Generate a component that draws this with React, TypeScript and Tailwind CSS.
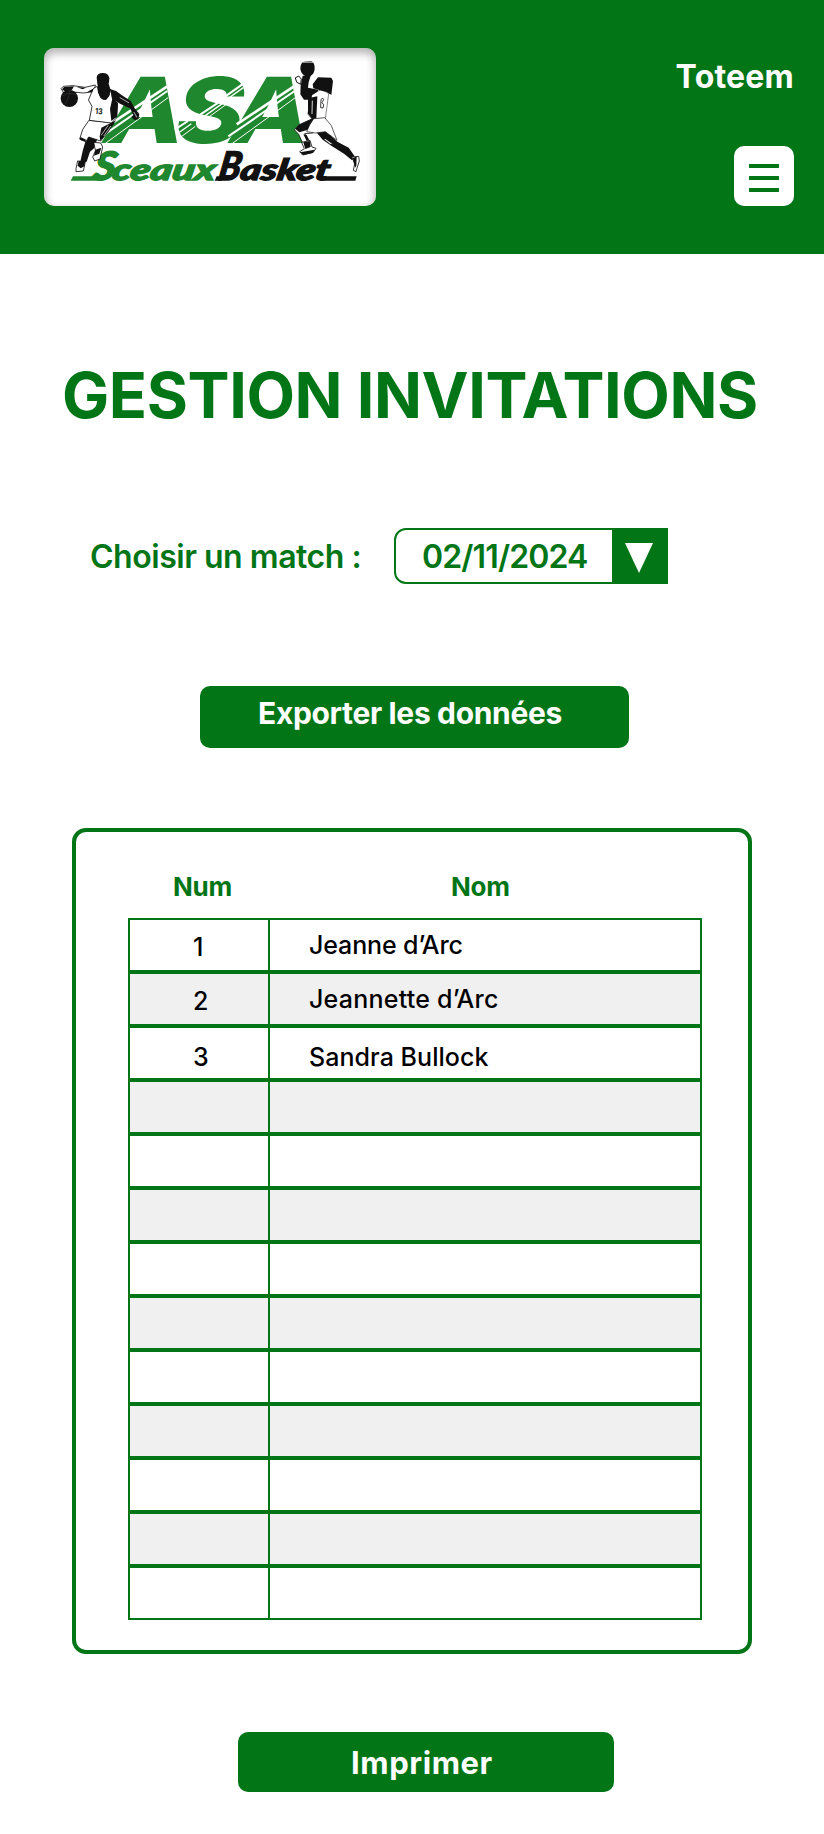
type Guest = { num: string; name: string; numPad: string; namePad: string; tracking: string };

const guests: Guest[] = [
  { num: "1", name: "Jeanne d’Arc", numPad: "pt-[15px]", namePad: "pt-[13px]", tracking: "tracking-[-0.12px]" },
  { num: "2", name: "Jeannette d’Arc", numPad: "pt-[15px]", namePad: "pt-[13px]", tracking: "tracking-[0.24px]" },
  { num: "3", name: "Sandra Bullock", numPad: "pt-[17px]", namePad: "pt-[17px]", tracking: "tracking-[0.05px]" },
];

const ROW_COUNT = 13;

function DribblingPlayer() {
  return (
    <g strokeLinejoin="round" strokeLinecap="round">
      {/* ball and reaching arm */}
      <path d="M94 160 L100 154 L128 152 L165 157 L196 150 L192 170 L160 174 L130 171 L104 176 Z" fill="#fff" stroke="#111" strokeWidth="2.5" />
      <path d="M96 163 L102 156 L132 154 L126 164 L106 170 Z M140 156 L168 158 L158 163 Z M172 170 L192 160 L190 172 Z" fill="#111" />
      <circle cx="118" cy="190" r="26" fill="#111" />
      <path d="M98 182 Q116 170 140 180 M104 208 Q120 188 118 166" fill="none" stroke="#555" strokeWidth="1" />
      {/* dark leg */}
      <path d="M172 300 L204 306 L192 340 L180 350 L170 380 L150 384 L158 348 Z" fill="#111" />
      <path d="M192 322 L212 324 L218 336 L210 372 L194 378 L188 366 L196 348 Z" fill="#fff" stroke="#111" strokeWidth="2.5" />
      <path d="M196 344 L214 338 L208 356 L192 362 Z" fill="#111" />
      <path d="M144 378 L166 380 L160 408 L138 410 L138 402 Z" fill="#fff" stroke="#111" strokeWidth="2.5" />
      <path d="M146 378 L166 378 L163 394 L152 400 L143 392 Z" fill="#111" />
      {/* shorts */}
      <path d="M178 256 L238 262 L252 264 L238 284 L212 318 L176 306 L168 320 L149 312 L158 284 Z" fill="#fff" stroke="#111" strokeWidth="2.5" />
      <path d="M214 278 L258 256 L234 292 L211 318 L209 304 Z M152 306 L168 314 L166 320 L149 314 Z" fill="#111" />
      <path d="M234 272 L214 300 M242 274 L222 302" stroke="#fff" strokeWidth="2" />
      {/* jersey */}
      <path d="M191 160 L202 154 Q208 192 222 194 Q238 192 240 164 L248 170 Q240 194 262 206 L258 250 L244 264 L178 256 L186 214 L176 196 Z" fill="#fff" stroke="#111" strokeWidth="2.5" />
      <path d="M248 186 L264 204 L262 244 L244 258 L240 222 Z" fill="#111" />
      {/* neck and head */}
      <path d="M203 146 L236 146 L242 166 L238 182 L228 195 L212 190 L204 172 Z" fill="#111" />
      <path d="M200 128 Q201 114 218 114 Q236 114 238 130 L237 142 Q234 157 220 158 Q204 156 202 146 Z" fill="#111" />
      {/* trailing arm */}
      <path d="M240 162 L258 168 L278 182 L302 198 L314 220 L328 238 L325 252 L314 256 L304 246 L310 240 L300 220 L270 206 L246 190 Z" fill="#111" />
      <path d="M270 188 L296 203 M312 232 L320 246" stroke="#fff" strokeWidth="2" />
      <text x="196" y="237" fontFamily="Inter, sans-serif" fontSize="24" fontWeight="700" textLength="22" lengthAdjust="spacingAndGlyphs" fill="#111" transform="rotate(5 206 228)">
        13
      </text>
    </g>
  );
}

function JumpingPlayer() {
  return (
    <g strokeLinejoin="round" strokeLinecap="round">
      {/* ball */}
      <path d="M811 102 Q811 82 822 80 L844 79 Q855 84 854 102 Q852 122 834 126 Q814 122 811 102 Z" fill="#111" />
      <path d="M820 82 L848 82" stroke="#fff" strokeWidth="2" />
      {/* raised arms */}
      <path d="M818 122 L842 122 L836 142 L834 158 L864 164 L862 194 L822 194 L811 178 L812 152 Z" fill="#111" />
      <path d="M797 128 L806 123 L814 132 L812 148 L801 142 Z" fill="#fff" stroke="#111" strokeWidth="3" />
      {/* trailing leg and shoe */}
      <path d="M858 290 L888 288 L922 320 L956 338 L974 364 L966 376 L942 356 L904 332 L878 314 Z" fill="#111" />
      <path d="M886 312 L908 328 L900 326 L882 312 Z" fill="#fff" />
      <path d="M966 366 L986 364 L988 378 L982 396 L978 410 L970 406 L974 386 Z" fill="#fff" stroke="#111" strokeWidth="2.5" />
      <path d="M968 370 L980 364 L979 392 L975 398 Z" fill="#111" />
      {/* torso */}
      <path d="M846 180 L874 162 L896 176 L891 214 L886 250 L846 252 L834 238 Z" fill="#fff" stroke="#111" strokeWidth="1.5" />
      <path d="M834 190 L862 184 L859 250 L846 252 L834 236 Z" fill="#111" />
      <path d="M847 198 L846 236" stroke="#fff" strokeWidth="2.5" />
      <path d="M874 192 Q880 186 881 194 L876 203 Q885 208 879 219 L873 218 Z" fill="none" stroke="#111" strokeWidth="2.5" />
      {/* head and hair */}
      <path d="M848 148 L864 127 L904 128 L909 138 L904 180 L890 171 L874 167 L850 160 Z" fill="#111" />
      {/* bent leg */}
      <path d="M852 250 L832 258 L806 270 L793 284 L806 298 L818 324 L836 318 L824 296 L848 294 Z" fill="#fff" stroke="#111" strokeWidth="2.5" />
      <path d="M852 248 L806 270 L796 282 L808 292 L834 284 L844 268 Z M820 298 L830 318 L838 316 L830 300 Z" fill="#111" />
      {/* shorts */}
      <path d="M852 251 L884 248 L904 272 L921 316 L886 290 L856 294 L830 290 L840 268 Z" fill="#fff" stroke="#111" strokeWidth="2" />
      {/* front shoe */}
      <path d="M816 322 L840 316 L846 336 L858 340 L850 352 L818 360 L809 350 L822 342 Z" fill="#fff" stroke="#111" strokeWidth="2.5" />
      <path d="M820 322 L840 318 L842 336 L826 342 Z M811 352 L854 344 L848 354 L820 360 Z" fill="#111" />
    </g>
  );
}

function ClubLogo() {
  return (
    <svg viewBox="42 39 996 474" className="h-full w-full" role="img" aria-label="ASA Sceaux Basket">
      <g fill="#1f872e" fontFamily="Inter, sans-serif" fontWeight="800" fontSize="273">
        <text transform="translate(206 325) skewX(-12)" textLength="242" lengthAdjust="spacingAndGlyphs">A</text>
        <text transform="translate(422 325) skewX(-12)" textLength="204" lengthAdjust="spacingAndGlyphs">S</text>
        <text transform="translate(585 325) skewX(-12)" textLength="242" lengthAdjust="spacingAndGlyphs">A</text>
      </g>
      {/* speed stripes */}
      <g stroke="#fff" fill="none">
        <path d="M240 268 L412 154" strokeWidth="8" />
        <path d="M215 304 L412 168" strokeWidth="6" />
        <path d="M225 326 L414 188" strokeWidth="3" />
        <path d="M578 190 L640 146 M506 242 L566 202 M434 284 L474 258" strokeWidth="6" />
        <path d="M592 192 L640 158 M514 250 L582 202 M440 298 L484 266" strokeWidth="4" />
        <path d="M528 252 L592 206 M450 308 L496 274" strokeWidth="3" />
        <path d="M620 268 L792 154" strokeWidth="8" />
        <path d="M595 304 L794 168" strokeWidth="6" />
        <path d="M606 326 L796 188" strokeWidth="3" />
      </g>
      <g fontFamily="Lato, sans-serif" fontWeight="900" fontStyle="italic" strokeWidth="4">
        <g fill="#1f872e" stroke="#1f872e">
          <text transform="translate(186 435) skewX(-10)" fontSize="118" textLength="66" lengthAdjust="spacingAndGlyphs">S</text>
          <text transform="translate(242 435) skewX(-10)" fontSize="88" textLength="310" lengthAdjust="spacingAndGlyphs">ceaux</text>
          <path d="M129 424 L224 424 L218 437 L122 437 Z" strokeWidth="0" />
        </g>
        <g fill="#111" stroke="#111">
          <text transform="translate(562 435) skewX(-10)" fontSize="118" textLength="66" lengthAdjust="spacingAndGlyphs">B</text>
          <text transform="translate(628 435) skewX(-10)" fontSize="88" textLength="268" lengthAdjust="spacingAndGlyphs">asket</text>
          <path d="M560 424 L580 424 L576 437 L554 437 Z M878 424 L980 424 L976 437 L874 437 Z" strokeWidth="0" />
        </g>
      </g>
      <DribblingPlayer />
      <JumpingPlayer />
    </svg>
  );
}

function Header() {
  return (
    <header className="flex h-[254px] items-start justify-between bg-[#027517] pt-12 pr-[30px] pl-11">
      <div className="relative h-[158px] w-[332px] overflow-hidden rounded-[10px] bg-white">
        <ClubLogo />
        <div className="absolute inset-0 rounded-[10px] shadow-[inset_0_4px_8px_1px_rgba(0,0,0,0.3)]" />
      </div>
      <div className="flex flex-col items-end gap-[49px] pt-[9px]">
        <span className="text-[32px] leading-10 font-bold tracking-[0.2px] text-white">Toteem</span>
        <button aria-label="Menu" className="flex size-[60px] flex-col items-center gap-2 rounded-[10px] bg-white pt-[18px]">
          <span className="h-1 w-[30px] bg-[#027517]" />
          <span className="h-1 w-[30px] bg-[#027517]" />
          <span className="h-1 w-[30px] bg-[#027517]" />
        </button>
      </div>
    </header>
  );
}

function MatchPicker() {
  return (
    <div className="mt-[101px] flex h-14 items-center pl-[90px] text-[#027517]">
      <span className="w-[304px] pt-0.5 text-[32px] leading-8 font-semibold tracking-[-0.47px] whitespace-nowrap">Choisir un match :</span>
      <button className="flex h-14 w-[274px] items-stretch overflow-hidden rounded-l-[12px] border-2 border-[#027517] bg-white">
        <span className="flex flex-1 items-center pt-0.5 pl-[26px] text-[32px] leading-8 font-semibold tracking-[-0.87px]">02/11/2024</span>
        <span className="flex w-[54px] justify-center bg-[#027517] pt-[13px]">
          <svg viewBox="0 0 28 30" className="h-[30px] w-7">
            <path d="M0 0 H28 L14 30 Z" fill="#fff" />
          </svg>
        </span>
      </button>
    </div>
  );
}

function GuestTable() {
  return (
    <section className="mt-20 ml-[72px] h-[826px] w-[680px] rounded-[14px] border-4 border-[#027517] pt-[39px] pl-[52px]">
      <div className="mb-[15px] flex text-[26px] leading-8 font-bold tracking-[-0.2px] text-[#027517]">
        <span className="w-[277px] pl-[45px]">Num</span>
        <span className="pl-[46px]">Nom</span>
      </div>
      <div className="w-[574px] text-[25px] leading-6 font-medium text-black">
        {Array.from({ length: ROW_COUNT }, (_, i) => {
          const guest = guests[i];
          return (
            <div key={i} className={`flex h-[54px] border-2 border-[#027517] ${i % 2 ? "bg-[#f0f0f0]" : "bg-white"}`}>
              <div className={`w-[140px] border-r-2 border-[#027517] pl-[63px] ${guest?.numPad ?? ""}`}>{guest?.num}</div>
              <div className={`flex-1 pl-[39px] ${guest?.namePad ?? ""} ${guest?.tracking ?? ""}`}>{guest?.name}</div>
            </div>
          );
        })}
      </div>
    </section>
  );
}

export default function App() {
  return (
    <main className="h-[1834px] w-[824px] overflow-hidden bg-white font-['Inter',sans-serif]">
      <Header />
      <h1 className="mt-[109px] pl-[62px] text-[63px] leading-[64px] font-bold tracking-[-0.42px] whitespace-nowrap text-[#027517]">
        GESTION INVITATIONS
      </h1>
      <MatchPicker />
      <button className="mt-[102px] ml-[200px] flex h-[62px] w-[429px] items-start rounded-[10px] bg-[#027517] pt-[11px] pl-[58px] text-[30px] leading-8 font-bold tracking-[-0.34px] text-white">
        Exporter les données
      </button>
      <GuestTable />
      <button className="mt-[78px] ml-[238px] flex h-[60px] w-[376px] items-start rounded-[10px] bg-[#027517] pt-[15px] pl-[113px] text-[31px] leading-8 font-bold tracking-[0.57px] text-white">
        Imprimer
      </button>
    </main>
  );
}
